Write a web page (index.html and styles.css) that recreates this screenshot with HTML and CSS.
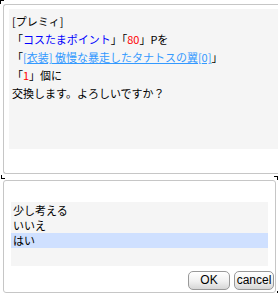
FILE: index.html
```html
<!DOCTYPE html>
<html lang="ja">
<head>
  <meta charset="UTF-8">
  <title>交換確認</title>
  <link rel="stylesheet" href="styles.css">
</head>
<body>
  <div class="mark mark-tl"></div>
  <div class="msg">
    <div class="msg-body">
      <div>[プレミィ]</div>
      <div>「<span class="blue">コスたまポイント</span>」「<span class="red">80</span>」Pを</div>
      <div>「<a class="item" href="#">[衣装] 傲慢な暴走したタナトスの翼[0]</a>」</div>
      <div>「<span class="red">1</span>」個に</div>
      <div>交換します。よろしいですか？</div>
    </div>
  </div>
  <div class="menu">
    <div class="mark mark-l"></div>
    <div class="mark mark-r"></div>
    <ul class="choices">
      <li>少し考える</li>
      <li>いいえ</li>
      <li class="selected">はい</li>
    </ul>
    <div class="buttons">
      <button class="btn btn-ok">OK</button>
      <button class="btn btn-cancel">cancel</button>
    </div>
    <div class="mark mark-br"></div>
  </div>
</body>
</html>
```

FILE: styles.css
```css
body {
  margin: 0;
  background: #fff;
  font-family: "Noto Sans CJK JP", "DejaVu Sans", sans-serif;
  font-size: 11px;
  color: #000;
  position: relative;
  overflow: hidden;
}
/* black corner ticks */
.mark {
  position: absolute;
  width: 3px;
  height: 3px;
}
.mark-tl {
  left: 0;
  top: 0;
  border-left: 1px solid #000;
  border-top: 1px solid #000;
}
.mark-l {
  left: -3px;
  top: -6px;
  border-left: 1px solid #000;
  border-bottom: 1px solid #000;
}
.mark-r {
  right: -3px;
  top: -5px;
  border-right: 1px solid #000;
  border-top: 1px solid #000;
}
.mark-br {
  right: -3px;
  bottom: -3px;
  border-right: 1px solid #000;
  border-bottom: 1px solid #000;
}
.msg {
  margin: 4px 0 0 3px;
  height: 170px;
  box-sizing: border-box;
  border: 1px solid #c6c6c6;
  border-right: none;
  border-radius: 3px 0 0 3px;
  padding: 4px 0 0 5px;
}
.msg-body {
  background: #f5f5f5;
  height: 140px;
  box-sizing: border-box;
  padding: 3px 0 0 3px;
  line-height: 18px;
  white-space: nowrap;
}
.blue {
  color: #0000ff;
}
.red {
  color: #ff0000;
}
.item {
  color: #3399ff;
  text-decoration: underline;
}
.menu {
  position: relative;
  margin: 6px 0 0 3px;
  width: 273px;
  height: 113px;
  box-sizing: border-box;
  border: 1px solid #c6c6c6;
  border-radius: 3px;
  padding: 21px 7px 0 7px;
}
.choices {
  list-style: none;
  margin: 0;
  padding: 1px 0 0;
  height: 64px;
  box-sizing: border-box;
  background: #f5f5f5;
}
.choices li {
  height: 15px;
  line-height: 15px;
  padding-left: 2px;
}
.choices li.selected {
  background: #cfe0ff;
}
.buttons {
  display: flex;
  justify-content: flex-end;
  gap: 4px;
  margin: 5px -6px 0 0;
}
.btn {
  height: 19px;
  padding: 0;
  border: 1px solid #999;
  border-radius: 5px;
  background: linear-gradient(#ffffff, #f0f0f0 55%, #d6d6d6);
  font-family: "Liberation Sans", Arial, sans-serif;
  font-size: 12px;
  line-height: 17px;
  color: #000;
}
.btn-ok {
  width: 42px;
}
.btn-cancel {
  width: 40px;
}
```
